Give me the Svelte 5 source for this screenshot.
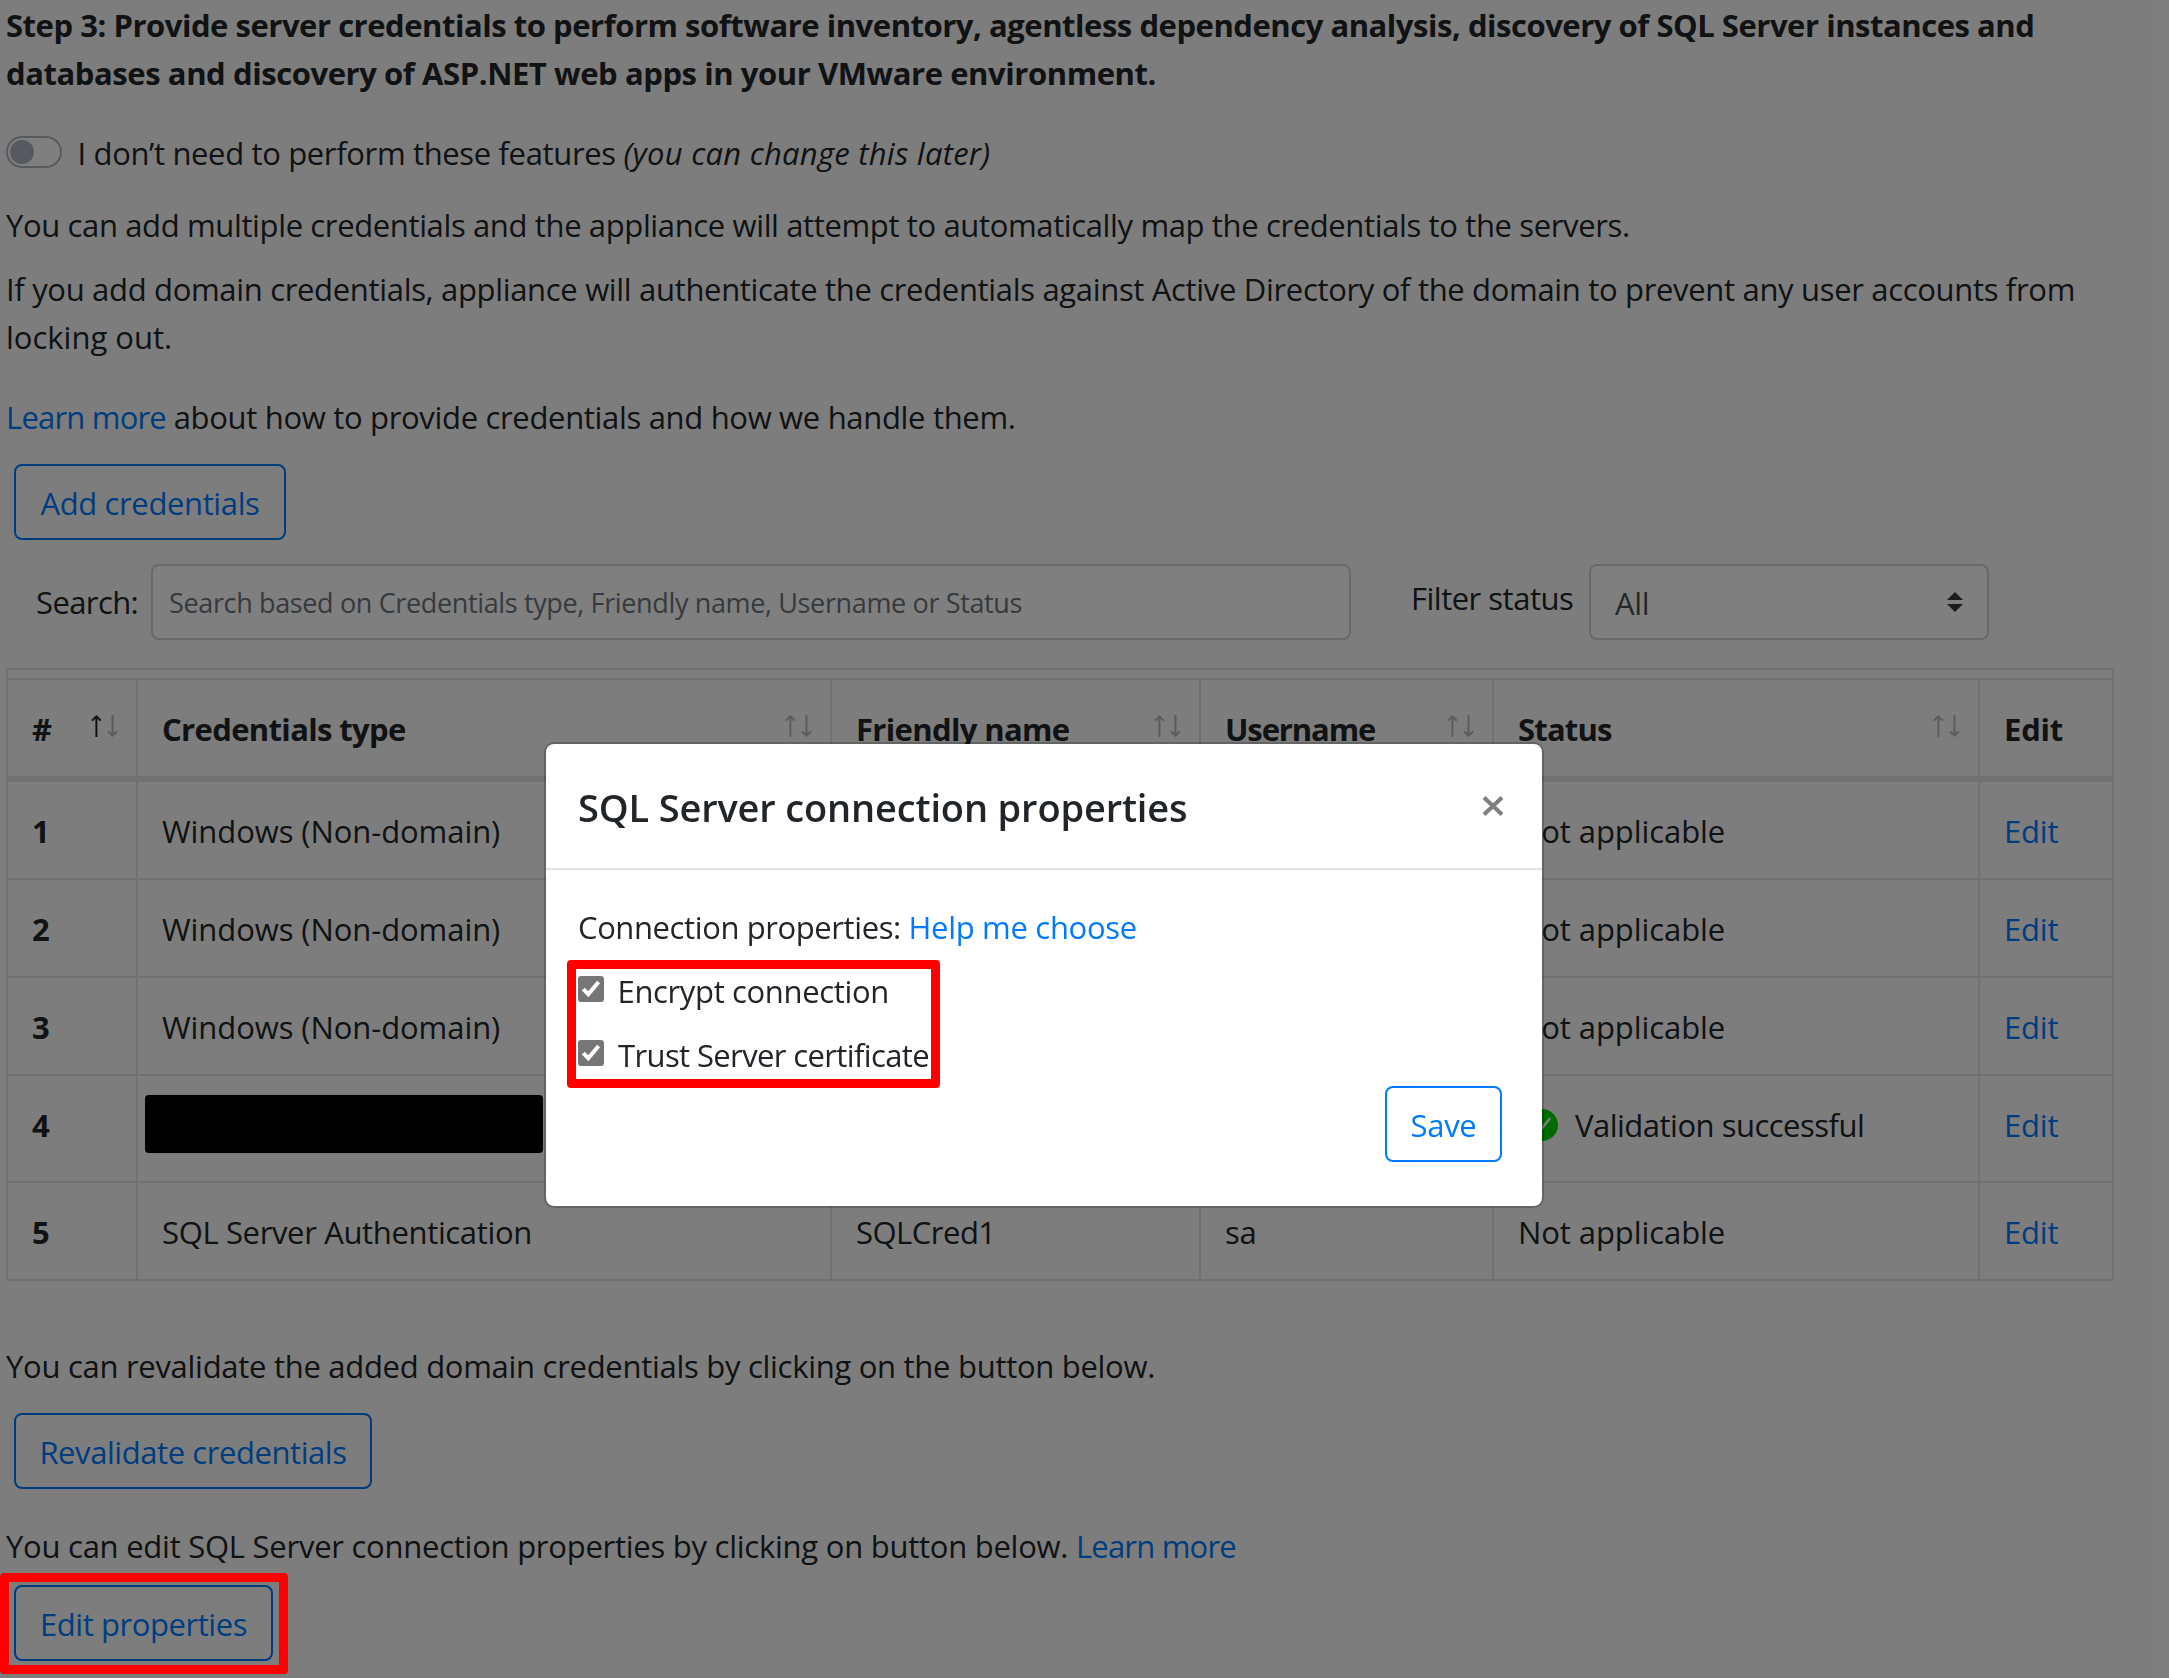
<script>
  const columns = [
    { label: '#', cls: 'num', sort: 'asc' },
    { label: 'Credentials type', cls: 'type', sort: 'none' },
    { label: 'Friendly name', cls: 'name', sort: 'none' },
    { label: 'Username', cls: 'user', sort: 'none' },
    { label: 'Status', cls: 'status', sort: 'none' },
    { label: 'Edit', cls: 'edit', sort: null }
  ];

  const rows = [
    { id: 1, type: 'Windows (Non-domain)', cls: 'windows', name: '', user: '', status: 'Not applicable' },
    { id: 2, type: 'Windows (Non-domain)', cls: 'windows', name: '', user: '', status: 'Not applicable' },
    { id: 3, type: 'Windows (Non-domain)', cls: 'windows', name: '', user: '', status: 'Not applicable' },
    { id: 4, type: null, cls: '', name: '', user: '', status: 'Validation successful', ok: true },
    { id: 5, type: 'SQL Server Authentication', cls: 'sql', name: 'SQLCred1', user: 'sa', status: 'Not applicable' }
  ];

  const options = [
    { label: 'Encrypt connection', cls: 'encrypt' },
    { label: 'Trust Server certificate', cls: 'trust' }
  ];
</script>

<main class="page">
  <h1>
    <span class="head-a">Step 3: Provide server credentials to perform software inventory, agentless dependency analysis, discovery of SQL Server instances and</span><br />
    <span class="head-b">databases and discovery of ASP.NET web apps in your VMware environment.</span>
  </h1>

  <div class="switch-row">
    <span class="switch"><span class="knob"></span></span>
    <span>I don’t need to perform these features <em>(you can change this later)</em></span>
  </div>

  <p class="multi">You can add multiple credentials and the appliance will attempt to automatically map the credentials to the servers.</p>
  <p class="domain">
    If you add domain credentials, appliance will authenticate the credentials against Active Directory of the domain to prevent any user accounts from<br />
    <span class="locking">locking out.</span>
  </p>
  <p class="learn"><a class="more" href="#learn">Learn more</a> about how to provide credentials and how we handle them.</p>

  <button class="btn add">Add credentials</button>

  <div class="filters">
    <label class="search-label" for="search">Search:</label>
    <input id="search" placeholder="Search based on Credentials type, Friendly name, Username or Status" />
    <span class="filter-label">Filter status</span>
    <div class="select">
      <span>All</span>
      <svg width="16" height="20" viewBox="0 0 16 20"><path d="M8 0l8 8H0zM8 20l8-8H0z" fill="#343a40" /></svg>
    </div>
  </div>

  <div class="table">
    <div class="row head">
      {#each columns as col}
        <div class="cell {col.cls}">
          <span class="h-{col.cls}">{col.label}</span>
          {#if col.sort}
            <svg class="sort" width="28" height="24" viewBox="0 0 28 24" fill="none" stroke="#212529">
              <g opacity={col.sort === 'asc' ? 1 : 0.3} stroke-width="2"><path d="M5.4 23V3M1 6.6L5.4 2.4l4.4 4.2" /></g>
              <g opacity="0.3" stroke-width="2"><path d="M21.5 1v20M17 17.4l4.5 4.2 4.5-4.2" /></g>
            </svg>
          {/if}
        </div>
      {/each}
    </div>
    {#each rows as row}
      <div class="row" class:tall={row.ok}>
        <div class="cell num"><b>{row.id}</b></div>
        <div class="cell type">
          {#if row.type}<span class={row.cls}>{row.type}</span>{:else}<span class="redacted"></span>{/if}
        </div>
        <div class="cell name"><span class="cred">{row.name}</span></div>
        <div class="cell user">{row.user}</div>
        <div class="cell status">
          {#if row.ok}
            <svg class="ok" width="32" height="32" viewBox="0 0 32 32">
              <circle cx="16" cy="16" r="16" fill="#00d800" />
              <path d="M8.5 16.5l5 5.5 10-12" fill="none" stroke="#fff" stroke-width="2.6" stroke-linecap="round" stroke-linejoin="round" />
            </svg>
            <span class="valid">{row.status}</span>
          {:else}
            <span class="na">{row.status}</span>
          {/if}
        </div>
        <div class="cell edit"><a href="#edit">Edit</a></div>
      </div>
    {/each}
  </div>

  <p class="revalidate">You can revalidate the added domain credentials by clicking on the button below.</p>
  <button class="btn reval">Revalidate credentials</button>
  <p class="props"><span class="props-text">You can edit SQL Server connection properties by clicking on button below.</span> <a class="more" href="#props">Learn more</a></p>
  <div class="marked">
    <button class="btn edit-props">Edit properties</button>
    <span class="mark"></span>
  </div>
</main>

<div class="backdrop">
  <section class="modal">
    <header>
      <h2>SQL Server connection properties</h2>
      <svg class="close" width="22" height="20" viewBox="0 0 22 20"><path d="M2 1.5l18 17M20 1.5l-18 17" stroke="#7f7f7f" stroke-width="4" /></svg>
    </header>
    <div class="body">
      <div class="intro"><span class="conn">Connection properties:</span> <a class="help" href="#help">Help me choose</a></div>
      <div class="options">
        {#each options as opt}
          <div class="option">
            <svg width="26" height="26" viewBox="0 0 26 26">
              <rect width="26" height="26" rx="3" fill="#767676" />
              <path d="M5.3 13.2l5 5L20.6 6" fill="none" stroke="#fff" stroke-width="4" />
            </svg>
            <span class={opt.cls}>{opt.label}</span>
          </div>
        {/each}
        <span class="mark"></span>
      </div>
      <div class="actions"><button class="btn save">Save</button></div>
    </div>
  </section>
</div>

<style>
  :global(body) { margin: 0; background: #fdfdfd; overflow: hidden; }
  .page, .backdrop {
    box-sizing: border-box;
    font: 31px/48px 'Open Sans', 'Noto Sans', sans-serif;
    letter-spacing: -0.35px;
    color: #212529;
  }
  .page { width: 2154px; height: 1678px; padding: 1px 0 0 6px; background: #fafafa; white-space: nowrap; }
  h1, h2, p { margin: 0; font: inherit; }
  h1 { font-weight: 700; }
  a { color: #007bff; text-decoration: none; }
  .head-a { letter-spacing: -0.465px; }
  .head-b { letter-spacing: -0.42px; }

  .switch-row { display: flex; gap: 15.5px; margin: 32px 0 24px; }
  .switch { box-sizing: border-box; width: 56px; height: 32px; margin-top: 7px; padding: 2px; border: 2px solid #adb5bd; border-radius: 16px; background: #fff; }
  .knob { display: block; width: 24px; height: 24px; border-radius: 12px; background: #adb5bd; }
  em { letter-spacing: 0.25px; }

  .multi { letter-spacing: -0.367px; }
  .domain { margin: 16px 0 32px; letter-spacing: -0.325px; }
  .locking { letter-spacing: 0; }
  .more { letter-spacing: -0.8px; }
  .learn { letter-spacing: -0.32px; }

  .btn {
    display: block;
    box-sizing: border-box;
    height: 76px;
    padding: 1px 0 0;
    border: 2px solid #007bff;
    border-radius: 8px;
    background: transparent;
    color: #007bff;
    font: inherit;
    text-align: center;
  }
  .add { width: 272px; margin: 23px 0 24px 8px; letter-spacing: -0.37px; }

  .filters { display: flex; height: 76px; }
  .search-label { width: 115px; padding: 14px 0 0 30px; letter-spacing: -0.6px; }
  input {
    box-sizing: border-box;
    width: 1200px;
    height: 76px;
    padding: 0 16px;
    border: 2px solid #ced4da;
    border-radius: 8px;
    background: #fff;
    font: 27px 'Open Sans', sans-serif;
    letter-spacing: -0.36px;
  }
  input::placeholder { color: #6c757d; opacity: 1; }
  .filter-label { width: 178px; margin-left: 60px; padding-top: 10px; letter-spacing: -0.5px; }
  .select {
    display: flex;
    justify-content: space-between;
    box-sizing: border-box;
    width: 400px;
    height: 76px;
    padding: 13px 24px 0 24px;
    border: 2px solid #ced4da;
    border-radius: 8px;
    background: #fff;
    color: #495057;
  }
  .select svg { margin-top: 13px; }

  .table { box-sizing: border-box; width: 2108px; margin-top: 28px; padding-top: 8px; border: 2px solid #dee2e6; border-bottom: 0; }
  .row { display: flex; box-sizing: border-box; height: 98px; border-bottom: 2px solid #dee2e6; }
  .row.tall { height: 107px; }
  .row.head { height: 104px; border-top: 2px solid #dee2e6; border-bottom: 6px solid #dee2e6; font-weight: 700; }
  .cell { display: flex; box-sizing: border-box; padding: 25px 17px 0 24px; border-right: 2px solid #dee2e6; }
  .head .cell { justify-content: space-between; }
  .num { width: 130px; }
  .type { width: 694px; }
  .name { width: 369px; }
  .user { width: 293px; }
  .status { width: 486px; }
  .edit { width: 132px; }
  .cell.edit { border-right: 0; letter-spacing: -0.2px; }
  .sort { margin-top: 9px; }
  .h-type, .h-name { letter-spacing: -0.65px; }
  .h-user { letter-spacing: -1.1px; }
  .h-status { letter-spacing: -0.8px; }
  .windows, .na { letter-spacing: -0.07px; }
  .sql { letter-spacing: -0.35px; }
  .cred { letter-spacing: -0.5px; }
  .valid { letter-spacing: -0.5px; }
  .redacted { width: 398px; height: 58px; margin: -6px 0 0 -17px; border-radius: 4px; background: #000; }
  .ok { margin: 8px 17px 0 8px; }

  .revalidate { margin: 61px 0 23px; letter-spacing: -0.285px; }
  .reval { width: 358px; margin-left: 8px; letter-spacing: -0.43px; }
  .props { margin: 33px 0 15px; }
  .props-text { letter-spacing: -0.25px; }
  .marked { position: relative; width: 259px; margin-left: 8px; }
  .edit-props { width: 259px; letter-spacing: -0.43px; }
  .mark { position: absolute; box-sizing: border-box; border: 9px solid #f00; border-radius: 4px; }
  .marked .mark { z-index: 2; top: -12px; left: -14px; width: 288px; height: 101px; }

  .backdrop {
    position: fixed;
    inset: 0;
    z-index: 1;
    padding: 742px 0 0 544px;
    background: rgba(0, 0, 0, 0.5);
    white-space: nowrap;
  }
  .modal {
    box-sizing: border-box;
    width: 1000px;
    height: 466px;
    border: 2px solid rgba(0, 0, 0, 0.2);
    border-radius: 10px;
    background: #fff;
    background-clip: padding-box;
  }
  header { display: flex; justify-content: space-between; height: 59px; padding: 33px 38px 32px 32px; border-bottom: 2px solid #dee2e6; }
  h2 { font-size: 38px; font-weight: 600; line-height: 60px; letter-spacing: -0.15px; }
  .close { margin-top: 19px; }
  .body { padding: 33px 40px 0 32px; }
  .conn { letter-spacing: -0.4px; }
  .help { letter-spacing: -0.3px; }
  .options { position: relative; display: grid; gap: 16px; margin-top: 16px; }
  .option { display: flex; gap: 13.5px; height: 48px; }
  .option svg { margin-top: 9px; }
  .encrypt { letter-spacing: -0.35px; }
  .trust { margin-left: 0.5px; letter-spacing: -0.62px; }
  .options .mark { top: -7px; left: -11px; width: 373px; height: 128px; }
  .actions { display: flex; justify-content: flex-end; margin-top: 7px; }
  .save { width: 117px; letter-spacing: -0.3px; }
</style>
